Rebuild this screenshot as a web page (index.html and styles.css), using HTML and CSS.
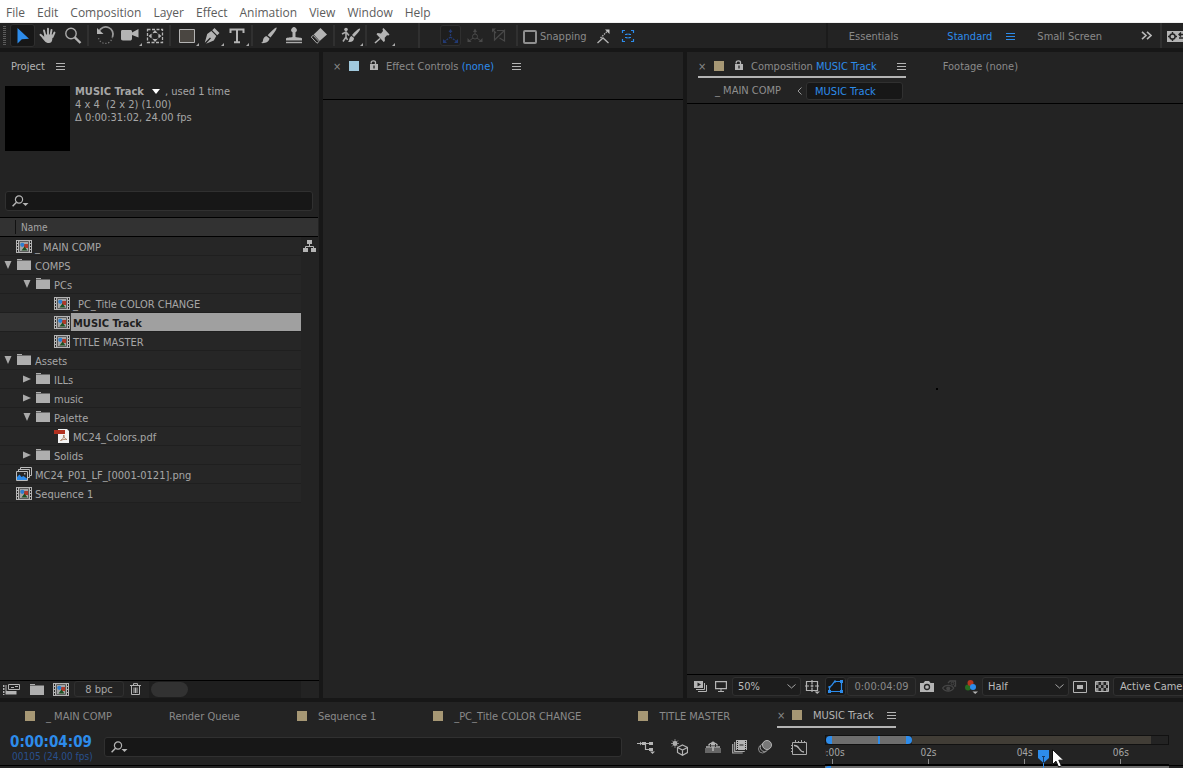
FILE: index.html
```html
<!DOCTYPE html>
<html lang="en">
<head>
<meta charset="utf-8">
<title>MUSIC Track</title>
<link rel="stylesheet" href="styles.css">
</head>
<body>
<svg class="defs" aria-hidden="true">
  <symbol id="menu" viewBox="0 0 9 9"><path d="M0 1.5h9M0 4.5h9M0 7.5h9" stroke="currentColor" fill="none"/></symbol>
  <symbol id="lock" viewBox="0 0 8 10"><path d="M0 4h8v6H0z" fill="currentColor"/><path d="M1.200 3.500V2.500c0-2.300 4.300-2.300 4.300 0V4" fill="none" stroke="currentColor" stroke-width="1.300"/><path d="M4 5.500v3" stroke="#232323" stroke-width="1.300"/></symbol>
  <symbol id="search" viewBox="0 0 17 12"><circle cx="7" cy="4.500" r="3.600" fill="none" stroke="currentColor" stroke-width="1.200"/><path d="M4.500 7.200L.6 11.200" stroke="currentColor" stroke-width="1.500"/><path d="M10.500 8h6l-3 3z" fill="currentColor"/></symbol>
  <symbol id="comp" viewBox="0 0 16 13"><path d="M0 0h16v13H0z" fill="#b4b4b4"/><path d="M1 1h1v2H1zM1 4h1v2H1zM1 7h1v2H1zM1 10h1v2H1zM14 1h1v2h-1zM14 4h1v2h-1zM14 7h1v2h-1zM14 10h1v2h-1z" fill="#262626"/><path d="M3.500 1.500h9v10h-9z" fill="#a4a4a4" stroke="#5a5a5a"/><path d="M8 4h4v4H8z" fill="#b03a2a"/><path d="M5.500 10.500l3-4 3 4z" fill="#1d5123"/><circle cx="6.300" cy="4.800" r="2.100" fill="#2d7fd0"/></symbol>
  <symbol id="folder" viewBox="0 0 14 11"><path d="M0 0h5v1H0zM0 1.500h14V11H0z" fill="#aeaeae"/></symbol>
  <symbol id="down" viewBox="0 0 8 8"><path d="M.5 0h7L4 8z" fill="#aaa"/></symbol>
  <symbol id="right" viewBox="0 0 8 8"><path d="M0 .5v7L8 4z" fill="#aaa"/></symbol>
  <symbol id="corner" viewBox="0 0 4 4"><path d="M4 0v4H0z" fill="#aaa"/></symbol>
</svg>

<nav class="menubar">
  <button>File</button><button>Edit</button><button>Composition</button><button>Layer</button><button>Effect</button><button>Animation</button><button>View</button><button>Window</button><button>Help</button>
</nav>

<header class="toolbar">
  <svg class="grip" width="3" height="20" viewBox="0 0 3 20"><path d="M1.500 0v20" stroke="#5b5b5b" stroke-width="3" stroke-dasharray="1 1"/></svg>
  <button class="tool on" aria-label="Selection"><svg width="24" height="22" viewBox="0 0 24 22"><path d="M6.500 3v15.500l4.300-4.200 7.200-.6z" fill="#2d8ceb"/></svg></button>
  <button class="tool" aria-label="Hand"><svg width="24" height="22" viewBox="0 0 24 22"><path d="M9.500 11L8 5.500M12 10V3.800M14.500 10.500l1-5.500M16.500 12l2-4.500M8.500 13.500l-4-3.800" stroke="#b4b4b4" stroke-width="1.900" stroke-linecap="round"/><path d="M8.200 9.500h8.600l-.6 5.500c-.3 2-1.300 3-3.200 3-2 0-3.200-.5-4.400-2L5.500 12.300l2.700.4z" fill="#b4b4b4"/></svg></button>
  <button class="tool" aria-label="Zoom"><svg width="24" height="22" viewBox="0 0 24 22"><circle cx="10" cy="8.500" r="5.200" fill="none" stroke="#aaa" stroke-width="1.400"/><path d="M13.800 12.300l5.700 5.700" stroke="#b4b4b4" stroke-width="2.400"/></svg></button>
  <i class="sep"></i>
  <button class="tool" aria-label="Rotation"><svg width="24" height="22" viewBox="0 0 24 22"><path d="M6 6.500A7 7 0 0 1 19.500 12" fill="none" stroke="#999" stroke-width="1.800"/><path d="M19.300 12A7 7 0 0 1 5.500 13" fill="none" stroke="#777" stroke-width="1.200" stroke-dasharray="1.300 1.700"/><path d="M4 3v6h6.500z" fill="#b4b4b4"/></svg></button>
  <button class="tool" aria-label="Camera"><svg width="24" height="22" viewBox="0 0 24 22"><path d="M4.500 5H12c1.500 0 2 .5 2 1.500v1L20.500 4v8.500L14 10v3.500c0 1.500-1 2-2 2H5c-1.500 0-2-.8-2-2v-7C3 5.500 3.500 5 4.500 5z" fill="#b4b4b4"/></svg><svg class="corner"><use href="#corner"/></svg></button>
  <button class="tool" aria-label="Pan Behind"><svg width="24" height="22" viewBox="0 0 24 22"><path d="M4.500 4.500h15v13h-15z" fill="none" stroke="#b4b4b4" stroke-width="1.300" stroke-dasharray="3 1.500"/><circle cx="12" cy="11" r="3.500" fill="none" stroke="#777" stroke-dasharray="1 1"/><path d="M12 5l2.500 3h-5zM12 17l2.500-3h-5zM5.500 11l3-2.500v5zM18.500 11l-3-2.500v5z" fill="#b4b4b4"/></svg></button>
  <i class="sep"></i>
  <button class="tool" aria-label="Rectangle"><svg width="24" height="22" viewBox="0 0 24 22"><path d="M4.500 4.500h15v13h-15z" fill="#4a4641" stroke="#b4b4b4"/></svg><svg class="corner"><use href="#corner"/></svg></button>
  <button class="tool" aria-label="Pen"><svg width="24" height="22" viewBox="0 0 24 22"><path d="M14.500 3l5 5-2.300 2.300-5-5zM11.300 6l5 5-2.500 4.500L6 18.800l5-5.500-1-.9-5.200 5.400L7.200 9z" fill="#b4b4b4"/></svg><svg class="corner"><use href="#corner"/></svg></button>
  <button class="tool" aria-label="Type"><svg width="24" height="22" viewBox="0 0 24 22"><path d="M5.500 8V4.500h13V8M12 4.500V17M9 17.200h6" fill="none" stroke="#b4b4b4" stroke-width="2"/></svg><svg class="corner"><use href="#corner"/></svg></button>
  <i class="sep"></i>
  <button class="tool" aria-label="Brush"><svg width="24" height="22" viewBox="0 0 24 22"><path d="M19.500 2.500c1 1-3 6.500-6 10l-2.800-2.300C13.500 7 18.500 2 19.500 2.500zM9.800 11.300l2.700 2.300c-.5 3.500-4.500 5-8.500 4.400 2.500-1 1.500-2 2.500-4.500.8-1.700 2-2.200 3.300-2.200z" fill="#b4b4b4"/></svg></button>
  <button class="tool" aria-label="Clone Stamp"><svg width="24" height="22" viewBox="0 0 24 22"><path d="M4 17.500h16" stroke="#aaa" stroke-width="1.400"/><path d="M4 15.500v-2c1-1.200 5-.8 6.500-1.500V7.300a2.700 2.700 0 1 1 3 0V12c1.500.7 5.500.3 6.500 1.500v2z" fill="#b4b4b4"/></svg></button>
  <button class="tool" aria-label="Eraser"><svg width="24" height="22" viewBox="0 0 24 22"><path d="M13.500 3l6.500 6.500-7.300 6.500-6-6.500z" fill="#b4b4b4"/><path d="M6.200 10.300l5.800 6.200-2 1.800L4.200 12z" fill="none" stroke="#aaa"/></svg></button>
  <i class="sep"></i>
  <button class="tool" aria-label="Roto Brush"><svg width="24" height="22" viewBox="0 0 24 22"><circle cx="7" cy="4.500" r="1.800" fill="#b4b4b4"/><path d="M3 9l4-2 3 3.500M7 7v5l-3 4.500M7 12l1.500 3" fill="none" stroke="#aaa" stroke-width="1.600"/><path d="M21 3.500c1 1-3.500 6-6 8.500l-2-2C15.500 7 20 3 21 3.500zM12.500 11l2.500 2c0 3-2 4.500-6 4 1.500-1 1-5 3.500-6z" fill="#b4b4b4"/></svg><svg class="corner"><use href="#corner"/></svg></button>
  <i class="sep"></i>
  <button class="tool" aria-label="Puppet Pin"><svg width="24" height="22" viewBox="0 0 24 22"><path d="M12.500 3l6 6.500-1 1-1.500-.3-2.300 2.600.2 3.200-1.200 1-7.200-7.700 1-1.200 3.500.3 2-2.400-.5-2z" fill="#b4b4b4"/><path d="M9 13.500L4 18" stroke="#b4b4b4" stroke-width="1.600"/></svg><svg class="corner"><use href="#corner"/></svg></button>
  <i class="sep wide"></i>
  <button class="tool small on" aria-label="Local Axis"><svg width="20" height="20" viewBox="0 0 20 20"><path d="M9.500 10V4M9.500 11l-6 4.500M9.500 11l6 4.500" fill="none" stroke="#233a73" stroke-width="1.300" stroke-dasharray="2 1"/><path d="M7.500 6l2-3 2 3zM2 17v-4l4 4zM17 17v-4l-4 4z" fill="#233a73"/></svg></button>
  <button class="tool small" aria-label="World Axis"><svg width="20" height="20" viewBox="0 0 20 20"><circle cx="10" cy="10.500" r="2.500" fill="none" stroke="#484848"/><path d="M10 8V4M8 12l-4.500 3.500M12 12l4.500 3.500" stroke="#484848"/><path d="M8 6l2-3.500L12 6zM2.500 16v-4l4 4zM17.500 16v-4l-4 4z" fill="#484848"/></svg></button>
  <button class="tool small" aria-label="View Axis"><svg width="20" height="20" viewBox="0 0 20 20"><path d="M5.500 6v8L15.500 4.500v10.500l-5-3M8 4.500h7.500M4 4l3 3" fill="none" stroke="#484848" stroke-width="1.200"/><path d="M3 2.500h4l-4 4z" fill="#484848"/></svg></button>
  <i class="sep snapsep"></i>
  <label class="snap"><input type="checkbox">Snapping</label>
  <button class="tool" aria-label="Snap to edges"><svg width="24" height="22" viewBox="0 0 24 22"><path d="M6.500 18l5.500-5 5.500 5" fill="none" stroke="#b4b4b4" stroke-width="1.300"/><path d="M9.500 13l7-7" stroke="#b4b4b4" stroke-width="1.300" stroke-dasharray="1.500 1"/><path d="M14 4.500h4.500V9z" fill="#c4c4c4"/></svg></button>
  <button class="tool" aria-label="Snap to features"><svg width="24" height="22" viewBox="0 0 24 22"><path d="M6.500 8V5.500H9M15 5.500h2.500V8M17.500 14v2.500H15M9 16.500H6.500V14M11 8.500v1H9M13 8.500v1h2M11 13.500v-1H9M13 13.500v-1h2" fill="none" stroke="#2d8ceb" stroke-width="1.200"/></svg></button>
  <div class="workspaces">
    <button>Essentials</button>
    <button class="current">Standard<svg class="i-menu"><use href="#menu"/></svg></button>
    <button>Small Screen</button>
    <button class="more" aria-label="More workspaces"><svg width="11" height="9" viewBox="0 0 11 9"><path d="M1 .8l4 3.700-4 3.700M6 .8l4 3.700-4 3.700" fill="none" stroke="#b8b8b8" stroke-width="1.600"/></svg></button>
    <i class="sep"></i>
    <button class="sync" aria-label="Sync settings"><svg width="16" height="11" viewBox="0 0 16 11"><path d="M0 0h16v11H0z" fill="#b4b4b4"/><circle cx="5.500" cy="5.500" r="2.600" fill="none" stroke="#232323" stroke-width="1.500"/><path d="M5.500 1v2M5.500 8v2M1 5.500h2M8 5.500h2M12 3.500h4M12 7h4M14 1.500l-2 2 2 2" fill="none" stroke="#232323" stroke-width="1.400"/></svg></button>
  </div>
</header>

<main class="panels">
  <section class="panel project">
    <div class="tabs"><span class="tab lit">Project</span><svg class="i-menu"><use href="#menu"/></svg></div>
    <div class="info">
      <div class="thumb"></div>
      <p><b>MUSIC Track</b><svg class="tri" width="8" height="5" viewBox="0 0 8 5"><path d="M0 0h8L4 5z" fill="#fff"/></svg>, used 1 time<br>4 x 4&nbsp; (2 x 2) (1.00)<br>Δ 0:00:31:02, 24.00 fps</p>
    </div>
    <label class="search"><svg class="i-search"><use href="#search"/></svg><input type="text" aria-label="Search project"></label>
    <div class="colhead"><span>Name</span></div>
    <div class="treewrap">
      <ul class="tree">
        <li><svg class="i-comp"><use href="#comp"/></svg><span>_ MAIN COMP</span></li>
        <li><svg class="tw"><use href="#down"/></svg><svg class="i-folder"><use href="#folder"/></svg><span>COMPS</span></li>
        <li class="l1"><svg class="tw"><use href="#down"/></svg><svg class="i-folder"><use href="#folder"/></svg><span>PCs</span></li>
        <li class="l2"><svg class="i-comp"><use href="#comp"/></svg><span>_PC_Title COLOR CHANGE</span></li>
        <li class="l2 selected"><svg class="i-comp"><use href="#comp"/></svg><span>MUSIC Track</span></li>
        <li class="l2"><svg class="i-comp"><use href="#comp"/></svg><span>TITLE MASTER</span></li>
        <li><svg class="tw"><use href="#down"/></svg><svg class="i-folder"><use href="#folder"/></svg><span>Assets</span></li>
        <li class="l1"><svg class="tw"><use href="#right"/></svg><svg class="i-folder"><use href="#folder"/></svg><span>ILLs</span></li>
        <li class="l1"><svg class="tw"><use href="#right"/></svg><svg class="i-folder"><use href="#folder"/></svg><span>music</span></li>
        <li class="l1"><svg class="tw"><use href="#down"/></svg><svg class="i-folder"><use href="#folder"/></svg><span>Palette</span></li>
        <li class="l2"><svg class="i-pdf" width="16" height="14" viewBox="0 0 16 14"><path d="M4 0h9l2 2v12H4z" fill="#f2f2f2"/><path d="M0 1h11v4H0z" fill="#b03020"/><path d="M6.500 11.500c2-1 3.500-3 3.300-5.500.2 2.500 1 3.500 3 4.500-2-.4-4 0-6.300 1z" fill="none" stroke="#9a6a4a" stroke-width=".8"/></svg><span>MC24_Colors.pdf</span></li>
        <li class="l1"><svg class="tw"><use href="#right"/></svg><svg class="i-folder"><use href="#folder"/></svg><span>Solids</span></li>
        <li><svg class="i-seq" width="16" height="14" viewBox="0 0 16 14"><path d="M2.500 4V2.500M4.500 2.500V.5h11v8H14M2.500 4V2.500h11v8H12M.5 4.500h11v9H.5z" fill="none" stroke="#bbb"/><path d="M1 13v-3l2.500-2.500 2 2.500L7.500 9l3.500 2.500V13z" fill="#2d8ceb"/><path d="M8 6h1.500v1.500H8z" fill="#aaa"/></svg><span>MC24_P01_LF_[0001-0121].png</span></li>
        <li><svg class="i-comp"><use href="#comp"/></svg><span>Sequence 1</span></li>
      </ul>
      <button class="flow" aria-label="Flowchart"><svg width="13" height="12" viewBox="0 0 13 12"><path d="M4 0h5v4H4zM0 8h5v4H0zM8 8h5v4H8z" fill="#b4b4b4"/><path d="M6.500 4v2M2.500 8V6.500h8V8" fill="none" stroke="#b4b4b4"/></svg></button>
    </div>
    <footer class="projfoot">
      <button aria-label="Interpret footage"><svg width="18" height="12" viewBox="0 0 18 12"><path d="M5.500 1.500h11v5h-11z" fill="none" stroke="#b4b4b4"/><path d="M8 4.500h3M12 3.500h3" stroke="#b4b4b4"/><path d="M.7 2v10" stroke="#b4b4b4" stroke-width="1.500" stroke-dasharray="2 1"/><path d="M2.500 2h1v6h10v3.500h-11z" fill="#b4b4b4"/></svg></button>
      <button aria-label="New folder"><svg class="i-folder"><use href="#folder"/></svg></button>
      <button aria-label="New composition"><svg class="i-comp"><use href="#comp"/></svg></button>
      <button class="field bpc">8 bpc</button>
      <button aria-label="Delete"><svg width="11" height="12" viewBox="0 0 11 12"><path d="M0 2.500h11M3.500 2V.6h4V2M1.500 3v8.500h8V3M4 4.500V10M5.500 4.500V10M7 4.500V10" fill="none" stroke="#b4b4b4"/></svg></button>
      <div class="scroll"><i></i></div>
    </footer>
  </section>

  <section class="panel effects">
    <div class="tabs"><button class="close" aria-label="Close">×</button><i class="chip blue"></i><svg class="i-lock"><use href="#lock"/></svg><span class="tab">Effect Controls <em>(none)</em></span><svg class="i-menu"><use href="#menu"/></svg></div>
  </section>

  <section class="panel composition">
    <div class="tabs">
      <div class="active"><button class="close" aria-label="Close">×</button><i class="chip"></i><svg class="i-lock"><use href="#lock"/></svg><span class="tab">Composition <em>MUSIC Track</em></span><svg class="i-menu"><use href="#menu"/></svg></div>
      <span class="tab footage">Footage (none)</span>
    </div>
    <div class="crumbs"><a href="#main">_ MAIN COMP</a><svg width="5" height="8" viewBox="0 0 5 8"><path d="M4.500.5L1 4l3.500 3.500" fill="none" stroke="#999"/></svg><a href="#music" class="field here">MUSIC Track</a></div>
    <div class="viewer"><i></i></div>
    <footer class="compfoot">
      <button class="ib" aria-label="Always preview"><svg width="13" height="11" viewBox="0 0 13 11"><path d="M0 0h9v7H0z" fill="#b4b4b4"/><path d="M3.500 1.500v4L7 3.500z" fill="#232323"/><path d="M10.500 2v6.500H2M12.500 4v6.500H4" fill="none" stroke="#b4b4b4"/></svg></button>
      <button class="ib display" aria-label="Display"><svg width="12" height="11" viewBox="0 0 12 11"><path d="M.6.6h10.800v7H.6z" fill="none" stroke="#b4b4b4" stroke-width="1.200"/><path d="M6 8v2M3 10.500h6" stroke="#b4b4b4"/></svg></button>
      <select class="field zoom" aria-label="Magnification"><option>50%</option></select>
      <button class="ib guides" aria-label="Guides"><svg width="15" height="14" viewBox="0 0 15 14"><path d="M1.500 1.500h11v9h-11zM7 0v4M7 8v4M0 6h4M10 6h4M5.500 6h3M7 4.500v3" fill="none" stroke="#b4b4b4" stroke-width="1.200"/><path d="M9.500 11.500H15L12.200 14z" fill="#b4b4b4"/></svg></button>
      <button class="ib field mask" aria-label="Mask visibility"><svg width="15" height="13" viewBox="0 0 15 13"><path d="M1.500 11.500V7C4 6 5 4 6.500 1.500h7v10z" fill="none" stroke="#2d8ceb" stroke-width="1.200"/><path d="M0 10h3v3H0zM12 10h3v3h-3zM12 0h3v3h-3zM.5 6h2v2h-2zM6 .5h2v2H6z" fill="#2d8ceb"/></svg></button>
      <button class="field time">0:00:04:09</button>
      <button class="ib" aria-label="Snapshot"><svg width="14" height="11" viewBox="0 0 14 11"><path d="M0 2h3.500L5 0h4l1.500 2H14v9H0z" fill="#b4b4b4"/><circle cx="7" cy="6" r="2.500" fill="none" stroke="#232323" stroke-width="1.300"/></svg></button>
      <button class="ib" aria-label="Show snapshot"><svg width="15" height="13" viewBox="0 0 15 13"><path d="M.7 8c2-3.500 9-3.500 11 0-2 4-9 4-11 0zM6 3l2-2h5.500v5H12" fill="none" stroke="#454545" stroke-width="1.300"/><circle cx="6.200" cy="8.500" r="2" fill="#454545"/><circle cx="10.500" cy="3.500" r="1.400" fill="none" stroke="#454545"/></svg></button>
      <button class="ib channels" aria-label="Channels"><svg width="13" height="14" viewBox="0 0 13 14"><circle cx="3" cy="7.500" r="3" fill="#276a20"/><circle cx="5.500" cy="3" r="3" fill="#b5371f"/><circle cx="8" cy="7" r="3" fill="#2d8ceb"/><path d="M7.500 11.500H13L10.200 14z" fill="#b4b4b4"/></svg></button>
      <select class="field half" aria-label="Resolution"><option>Half</option></select>
      <button class="ib" aria-label="Region of interest"><svg width="14" height="12" viewBox="0 0 14 12"><path d="M.5.5h13v11H.5z" fill="none" stroke="#b4b4b4"/><path d="M4 4h6v4H4z" fill="#b4b4b4"/></svg></button>
      <button class="ib grid" aria-label="Transparency grid"><svg width="14" height="11" viewBox="0 0 14 11"><path d="M.5.5h13v10H.5z" fill="none" stroke="#b4b4b4"/><path d="M1 2.500h12M1 8.500h12" stroke="#8c8c8c" stroke-width="3" stroke-dasharray="2.500 2.500"/><path d="M3.500 5.500h9.500" stroke="#8c8c8c" stroke-width="3" stroke-dasharray="2.500 2.500"/></svg></button>
      <button class="field view">Active Camera</button>
    </footer>
  </section>
</main>

<section class="timeline">
  <div class="tltabs">
    <button><i class="chip"></i>_ MAIN COMP</button>
    <button>Render Queue</button>
    <button><i class="chip"></i>Sequence 1</button>
    <button><i class="chip"></i>_PC_Title COLOR CHANGE</button>
    <button><i class="chip"></i>TITLE MASTER</button>
    <div class="active"><button class="close" aria-label="Close">×</button><i class="chip"></i>MUSIC Track<svg class="i-menu"><use href="#menu"/></svg></div>
  </div>
  <div class="tlrow">
    <div class="clock"><b>0:00:04:09</b><span>00105 (24.00 fps)</span></div>
    <label class="search"><svg class="i-search"><use href="#search"/></svg><input type="text" aria-label="Search layers"></label>
    <div class="switches">
      <button aria-label="Mini-flowchart"><svg width="18" height="14" viewBox="0 0 18 14"><path d="M0 3.500h6M8 3.500h8M8.500 3.500v6H12" fill="none" stroke="#b4b4b4" stroke-width="1.200"/><path d="M3 1.500l2 2-2 2zM5 2h4v3H5zM12 2h4v3h-4zM12 8h4v3h-4zM13 11.500h5L15.500 14z" fill="#b4b4b4"/></svg></button>
      <button class="draft" aria-label="Draft 3D"><svg width="17" height="17" viewBox="0 0 17 17"><circle cx="4" cy="4.500" r="2.400" fill="#b4b4b4"/><path d="M4 0v9M0 4.500h8M1 1.500l6 6M7 1.500l-6 6" stroke="#aaa" stroke-width=".7"/><path d="M11.500 6l5 2.500v5l-5 2.800-5-2.800v-5zM6.500 8.500l5 2.500 5-2.500M11.500 11v5" fill="#232323" stroke="#b4b4b4" stroke-width="1.200"/></svg></button>
      <button class="shy" aria-label="Hide shy layers"><svg width="16" height="12" viewBox="0 0 16 12"><path d="M0 7h16v5H0z" fill="#666"/><path d="M1 6h14M8 6v4" stroke="#b4b4b4" stroke-width="1.600"/><path d="M3 4.500C3.300 2.500 5 2 6.300 1.500a2 2 0 0 1 3.400 0C11 2 12.700 2.500 13 4.500z" fill="#b4b4b4"/><path d="M5.500 3v3M10.500 3v3" stroke="#333"/></svg></button>
      <button aria-label="Frame blending"><svg width="15" height="14" viewBox="0 0 15 14"><path d="M4 0h11v10H4z" fill="#b4b4b4"/><path d="M5.500 1v9M13.500 1v9" stroke="#232323" stroke-dasharray="1 1"/><path d="M7.500 5h4" stroke="#232323"/><path d="M.7 4v9h10M2.700 2v9.500h10" fill="none" stroke="#aaa" stroke-width="1.200"/></svg></button>
      <button aria-label="Motion blur"><svg width="14" height="14" viewBox="0 0 14 14"><circle cx="4.500" cy="9" r="4" fill="#232323" stroke="#8a8a8a"/><circle cx="6.500" cy="7.300" r="4.200" fill="#232323" stroke="#a0a0a0"/><circle cx="9" cy="5" r="4.500" fill="#777" stroke="#b4b4b4"/></svg></button>
      <button class="graph" aria-label="Graph editor"><svg width="17" height="15" viewBox="0 0 17 15"><path d="M1.500 2.500h14v12h-14zM4.500 0v2M7.500 1v1M10.500 0v2M13.500 1v1M0 5.500h1M0 8.500h1M0 11.500h1" fill="none" stroke="#aaa"/><path d="M3 5.500c6-.5 4 6 10 6.500" fill="none" stroke="#b4b4b4" stroke-width="1.300"/></svg></button>
    </div>
    <div class="ruler">
      <div class="range"><i class="cap l"></i><i class="seen"></i><i class="cap r"></i><i class="rest"></i></div>
      <div class="marks"><span>0:00s</span><span>02s</span><span>04s</span><span>06s</span></div>
      <div class="workarea"><i class="cap l"></i></div>
      <svg class="playhead" width="11" height="18" viewBox="0 0 11 18"><path d="M0 0h11v8l-5.500 5L0 8z" fill="#2d8ceb"/><path d="M5.500 6v7M4 6.500h3" stroke="#173a66"/><path d="M5.500 13v5" stroke="#2d8ceb"/></svg>
      <svg class="pointer" width="13" height="19" viewBox="0 0 13 19"><path d="M.5.500v15l3.500-3.300 2.600 5.800 2.800-1.200-2.600-5.600h5z" fill="#fff" stroke="#111"/></svg>
    </div>
  </div>
</section>
</body>
</html>
```

FILE: styles.css
```css
* { box-sizing: border-box; }
body {
  margin: 0;
  height: 100vh;
  display: flex;
  flex-direction: column;
  overflow: hidden;
  background: #171717;
  color: #a6a6a6;
  font: 11px/13px "DejaVu Sans Condensed", "DejaVu Sans", sans-serif;
}
button, input, select { font: inherit; color: inherit; }
button {
  background: none;
  border: 0;
  padding: 0;
  white-space: nowrap;
}
svg { display: block; flex: none; }
.defs { position: absolute; width: 0; height: 0; }
.i-menu { width: 9px; height: 9px; color: #b4b4b4; }
.i-lock { width: 8px; height: 10px; color: #b4b4b4; }
.i-search { width: 17px; height: 12px; color: #b4b4b4; }
.i-comp { width: 16px; height: 13px; }
.i-folder { width: 14px; height: 11px; }
.tw { width: 8px; height: 8px; }

.menubar {
  flex: none;
  display: flex;
  height: 23px;
  padding: 3px 0 0 6px;
  gap: 12px;
  background: #fff;
  border-bottom: 1px solid #f0f0f0;
  color: #5c5c5c;
  font: 12px/20px "Open Sans", "Noto Sans", sans-serif;
}

.toolbar {
  flex: none;
  display: flex;
  align-items: center;
  height: 25px;
  padding-left: 3px;
  background: #232323;
}
.grip { margin-right: 4px; }
.tool {
  flex: none;
  position: relative;
  display: flex;
  align-items: center;
  justify-content: center;
  width: 25px;
  height: 23px;
}
.tool.on { background: #171717; box-shadow: inset 0 0 0 1px #2f2f2f; border-radius: 3px; }
.tool.small { height: 21px; width: 21px; margin-right: 3px; }
.tool.small.on { background: #1e1e1e; }
.corner { position: absolute; right: 0; bottom: 1px; width: 3px; height: 3px; }
.sep { flex: none; width: 2px; height: 21px; margin: 0 3px 0 2px; background: #303030; }
.sep.wide { margin: 0 20px 0 23px; height: 25px; }
.sep.snapsep { margin: 0 5px 0 4px; }
.snap { display: flex; align-items: center; gap: 3px; margin-right: 4px; color: #8a8a8a; padding-top: 2px; }
.snap input {
  appearance: none;
  width: 14px;
  height: 14px;
  margin: 0;
  border: 2px solid #8f8f8f;
  border-radius: 2px;
}
.workspaces {
  display: flex;
  align-items: center;
  height: 25px;
  margin-left: auto;
  padding-left: 21px;
  border-left: 2px solid #1b1b1b;
  color: #8a8a8a;
  overflow: hidden;
}
.workspaces button { padding-top: 2px; margin-right: 49px; }
.workspaces .current { display: flex; align-items: center; gap: 14px; margin-right: 22px; color: #2d8ceb; }
.workspaces .current .i-menu { color: #2d8ceb; }
.workspaces button:nth-child(3) { margin-right: 39px; }
.workspaces .more { margin-right: 6px; padding: 0; }
.workspaces .sync { margin: 0; }
.workspaces .sep { height: 25px; margin-right: 5px; }

.panels {
  flex: 1;
  min-height: 0;
  display: grid;
  grid-template-columns: 319fr 360fr 496fr;
  gap: 4px;
  margin: 4px 0;
}
.panel { min-width: 0; display: flex; flex-direction: column; background: #232323; overflow: hidden; }
.tabs { flex: none; display: flex; align-items: center; height: 28px; padding-left: 11px; }
.tab { color: #8a8a8a; white-space: nowrap; }
.tab.lit { color: #b4b4b4; }
.tab em { font-style: normal; color: #2d8ceb; }
.project .i-menu { margin-left: 11px; }
.chip { flex: none; width: 10px; height: 10px; background: #a69774; }
.chip.blue { background: #a0c8dc; }
.close { flex: none; color: #8a8a8a; width: 6px; }

.info { flex: none; display: flex; gap: 5px; padding: 5px 5px 0; height: 111px; }
.info p { margin: 0; white-space: nowrap; }
.thumb { width: 65px; height: 65px; margin-top: 1px; background: #000; }
.tri { display: inline-block; margin: 0 5px 2px 8px; vertical-align: middle; }
.search {
  display: flex;
  align-items: center;
  gap: 4px;
  height: 20px;
  background: #171717;
  border: 1px solid #303030;
  border-radius: 3px;
  padding-left: 6px;
}
.search input { flex: 1; min-width: 0; height: 16px; background: none; border: 0; outline: 0; padding: 0; }
.project .search { margin: 0 6px 6px 5px; flex: none; }
.colhead {
  flex: none;
  display: flex;
  align-items: center;
  height: 20px;
  margin-right: 1px;
  padding-left: 15px;
  background: #323232;
  border-top: 1px solid #000;
  border-bottom: 1px solid #000;
  font-size: 10px;
}
.colhead span { border-left: 1px solid #111; padding: 2px 0 0 5px; line-height: 12px; }
.treewrap { flex: 1; display: flex; min-height: 0; border-bottom: 1px solid #000; }
.tree { flex: 1; list-style: none; margin: 0; padding: 0; }
.tree li {
  display: flex;
  align-items: center;
  height: 19px;
  padding-left: 16px;
  background: #262626;
  border-bottom: 1px solid #1f1f1f;
  white-space: nowrap;
}
.tree li span { flex: 1; padding: 4px 0 1px 3px; line-height: 13px; }
.tree .tw { margin: 0 4px 0 -12px; }
.tree .i-folder { margin: 0 1px 1px; }
.tree .l1 { padding-left: 35px; }
.tree .l2 { padding-left: 54px; }
.tree .selected { background: #323232; }
.tree .selected span { margin-left: 1px; padding-left: 2px; background: #a0a0a0; color: #1e1e1e; font-weight: bold; }
.flow { align-self: flex-start; padding: 3px 3px 0 2px; }
.projfoot { flex: none; display: flex; align-items: center; height: 17px; padding: 0 0 1px 3px; gap: 9px; }
.field {
  background: #1d1d1d;
  border: 1px solid #303030;
  border-radius: 3px;
}
.projfoot .bpc { width: 50px; height: 16px; margin: 0 -3px 0 -4px; background: #232323; line-height: 13px; }
.scroll { flex: 1; margin: 0 18px 0 -1px; padding: 1px 0 0 2px; height: 17px; background: #1e1e1e; }
.scroll i { display: block; width: 37px; height: 15px; border-radius: 8px; background: #323232; }

.active { display: flex; align-items: center; }
.effects .tabs { height: 48px; padding: 0 0 19px 10px; border-bottom: 1px solid #000; }
.effects .chip, .composition .chip { margin: 0 11px 0 10px; }
.effects .i-lock, .composition .i-lock { margin: 0 8px 2px 0; }
.effects .i-menu { margin-left: 18px; }
.composition .i-menu { margin-left: 20px; }
.composition .tabs { align-items: stretch; height: 26px; }
.composition .active { border-bottom: 2px solid #b4b4b4; padding-top: 4px; }
.footage { margin-left: 37px; padding-top: 8px; }
.crumbs {
  flex: none;
  display: flex;
  align-items: center;
  gap: 10px;
  height: 26px;
  padding-left: 28px;
  border-bottom: 1px solid #000;
}
.crumbs a { color: #8f8f8f; text-decoration: none; margin-right: 6px; }
.crumbs .here { width: 97px; height: 18px; margin: 0 0 0 -6px; padding: 2px 8px; background: #171717; color: #2d8ceb; }
.viewer { flex: 1; display: flex; align-items: center; justify-content: center; padding-left: 4px; border-bottom: 1px solid #000; }
.viewer i { width: 2px; height: 2px; background: #000; }
.compfoot { flex: none; display: flex; align-items: center; height: 23px; padding-left: 7px; }
.compfoot > * { flex: none; }
.ib { display: flex; align-items: center; justify-content: center; margin-right: 8px; }
.ib.display, .ib.guides { margin-right: 5px; }
.ib.channels, .ib.grid { margin-right: 4px; }
.compfoot .field { height: 19px; margin-right: 4px; }
.compfoot select {
  appearance: none;
  padding: 0 5px;
  color: #bbb;
  line-height: 15px;
  background: #1d1d1d url("data:image/svg+xml,%3Csvg xmlns='http://www.w3.org/2000/svg' width='9' height='5' viewBox='0 0 9 5'%3E%3Cpath d='M.5.5l4 3.500 4-3.500' fill='none' stroke='%23a6a6a6'/%3E%3C/svg%3E") no-repeat right 4px center;
}
.compfoot .zoom { width: 69px; }
.compfoot .mask { width: 21px; margin-right: 1px; background: #171717; }
.compfoot .time { width: 69px; color: #8a8a8a; background: #232323; }
.compfoot .half { width: 87px; }
.compfoot .view { padding: 0 6px; color: #bbb; }

.timeline { flex: none; background: #232323; height: 66px; overflow: hidden; }
.tltabs { display: flex; height: 26px; padding-left: 25px; gap: 57px; color: #8a8a8a; }
.tltabs > button, .tltabs .active { flex: none; display: flex; align-items: center; gap: 11px; padding-top: 2px; }
.tltabs .active { margin-left: -10px; gap: 9px; color: #b4b4b4; border-bottom: 2px solid #b4b4b4; }
.tltabs .active .chip { margin-right: 2px; }
.tltabs .active .i-menu { margin-left: 4px; }
.tlrow { display: flex; height: 38px; padding: 7px 14px 0 10px; border-bottom: 1px solid #000; }
.clock { flex: none; width: 94px; color: #2d8ceb; }
.clock b { display: block; font-size: 15px; line-height: 14px; }
.clock span { display: block; padding: 2px 0 0 2px; font-size: 10px; line-height: 12px; color: #28508e; }
.tlrow .search { flex: 511 1 0; margin-top: 2px; }
.switches { flex: none; display: flex; align-items: center; gap: 11px; height: 24px; padding: 0 17px 0 15px; }
.switches .draft { margin: 0 6px 0 5px; }
.switches .graph { margin-left: 8px; }
.ruler { flex: 344 1 0; position: relative; height: 33px; overflow: hidden; background: #232323; }
.range { display: flex; height: 10px; border: 1px solid #111; }
.cap { width: 6px; height: 8px; background: #2d8ceb; }
.cap.l { border-radius: 4px 0 0 4px; }
.cap.r { border-radius: 0 4px 4px 0; }
.seen { width: 74px; background: linear-gradient(#2d8ceb, #2d8ceb) no-repeat 46px 0 / 2px 8px #6e6e6e; }
.rest { flex: 1; margin-right: 17px; background: #413d36; }
.marks {
  display: grid;
  grid-template-columns: repeat(4, 25%);
  margin-left: -12%;
  height: 19px;
  font-size: 10px;
  line-height: 12px;
  text-align: center;
}
.marks span {
  padding-top: 2px;
  background: linear-gradient(#8a8a8a, #8a8a8a) no-repeat center bottom / 1px 5px;
}
.workarea { display: flex; height: 10px; border-top: 2px solid #000; background: #6e6e6e; }
.workarea .cap { height: 8px; }
.playhead { position: absolute; left: 62%; top: 15px; }
.pointer { position: absolute; left: 66%; top: 14px; }
```
